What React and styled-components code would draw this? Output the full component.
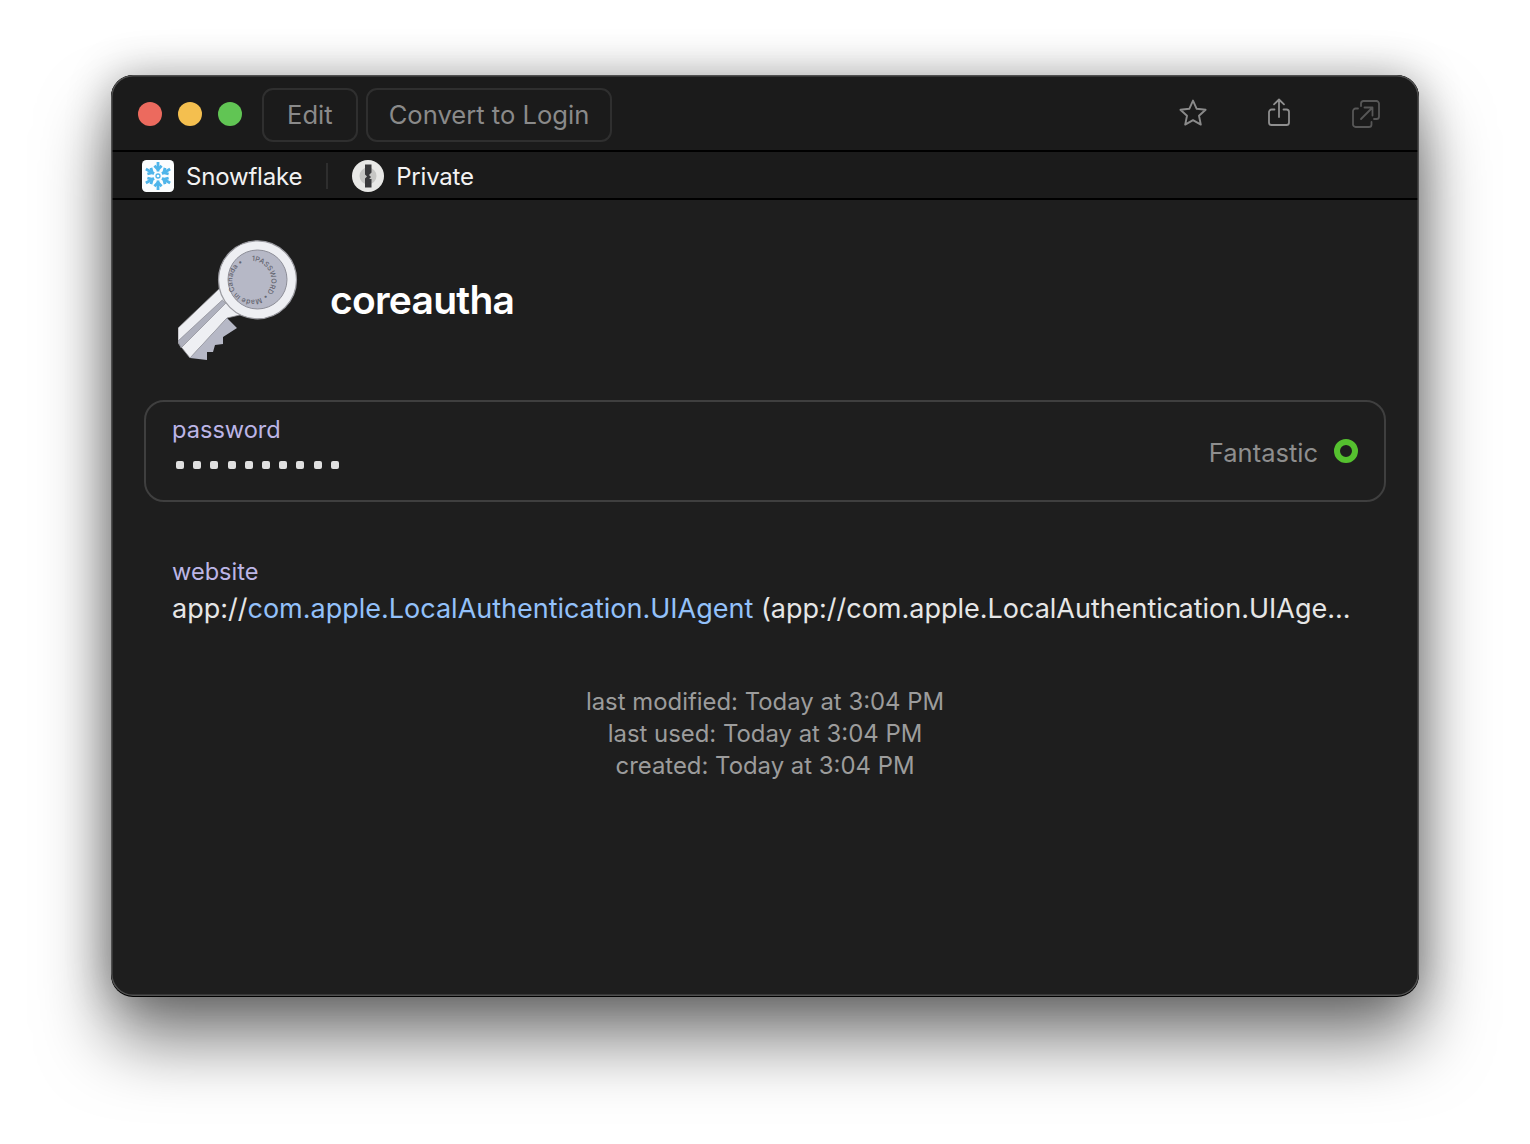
import styled, { createGlobalStyle } from "styled-components";

const GlobalStyle = createGlobalStyle`
  html, body {
    margin: 0;
    padding: 0;
    background: #fff;
  }
  body {
    font-family: Inter, "Noto Sans", "Liberation Sans", sans-serif;
  }
`;

const App = () => {
  return (
    <Page>
      <GlobalStyle />
      <Window>
        <TitleBar>
          <Lights>
            <Light color="#ec6a5e" />
            <Light color="#f4bf4f" />
            <Light color="#61c554" />
          </Lights>
          <ToolButton inset={23}>Edit</ToolButton>
          <ToolButton inset={21}>Convert to Login</ToolButton>
          <ToolIcons>
            <IconSlot>
              <StarIcon />
            </IconSlot>
            <IconSlot>
              <ShareIcon />
            </IconSlot>
            <IconSlot>
              <OpenIcon />
            </IconSlot>
          </ToolIcons>
        </TitleBar>

        <PathBar>
          <PathItem>
            <SnowflakeLogo />
            <span>Snowflake</span>
          </PathItem>
          <PathDivider />
          <PathItem>
            <VaultLogo />
            <span>Private</span>
          </PathItem>
        </PathBar>

        <Content>
          <Header>
            <KeyIcon />
            <Title>coreautha</Title>
          </Header>

          <PasswordBox>
            <PasswordField>
              <FieldLabel>password</FieldLabel>
              <Dots>
                {Array.from({ length: 10 }).map((_, i) => (
                  <Dot key={i} />
                ))}
              </Dots>
            </PasswordField>
            <Strength>
              <span>Fantastic</span>
              <StrengthRing />
            </Strength>
          </PasswordBox>

          <WebsiteField>
            <FieldLabel>website</FieldLabel>
            <WebsiteValue>
              app://<Host>com.apple.LocalAuthentication.UIAgent</Host> (app://com.apple.LocalAuthentication.UIAge...
            </WebsiteValue>
          </WebsiteField>

          <Meta>
            <div>last modified: Today at 3:04 PM</div>
            <div>last used: Today at 3:04 PM</div>
            <div>created: Today at 3:04 PM</div>
          </Meta>
        </Content>
      </Window>
    </Page>
  );
};

const StarIcon = () => (
  <svg width="30" height="30" viewBox="0 0 30 30" fill="none">
    <path
      d="M15 2.600l3.700 8.200 8.900 1-6.600 6 1.800 8.800-7.800-4.500-7.800 4.500 1.800-8.800-6.600-6 8.900-1z"
      stroke="#8a8a8a"
      strokeWidth="1.9"
      strokeLinejoin="round"
    />
  </svg>
);

const ShareIcon = () => (
  <svg width="24" height="30" viewBox="0 0 24 30" fill="none">
    <path
      d="M7.500 11.500H4.600A2.600 2.600 0 0 0 2 14.100v10.300A2.600 2.600 0 0 0 4.600 27h14.800a2.600 2.600 0 0 0 2.600-2.600V14.100a2.600 2.600 0 0 0-2.600-2.600h-2.900"
      stroke="#8f8f8f"
      strokeWidth="1.8"
      strokeLinecap="round"
    />
    <path
      d="M12 19V1.800M7 6.400l5-4.900 5 4.900"
      stroke="#8f8f8f"
      strokeWidth="1.8"
      strokeLinecap="round"
      strokeLinejoin="round"
    />
  </svg>
);

const OpenIcon = () => (
  <svg width="30" height="30" viewBox="-1 -1 30 30" fill="none">
    <path
      d="M10 7V4.600A2.600 2.600 0 0 1 12.600 2h12.800A2.600 2.600 0 0 1 28 4.600v12.800a2.600 2.600 0 0 1-2.600 2.600h-2.400"
      stroke="#575757"
      strokeWidth="1.8"
      strokeLinecap="round"
    />
    <path
      d="M7 9.500H4.600A2.600 2.600 0 0 0 2 12.100v13.300A2.600 2.600 0 0 0 4.600 28h13.300a2.600 2.600 0 0 0 2.600-2.600V23"
      stroke="#575757"
      strokeWidth="1.8"
      strokeLinecap="round"
    />
    <path
      d="M10 20L21 9M13.500 8.500H21.500V16.500"
      stroke="#575757"
      strokeWidth="1.8"
      strokeLinecap="round"
      strokeLinejoin="round"
    />
  </svg>
);

const SnowflakeLogo = () => (
  <LogoBox>
    <svg width="32" height="32" viewBox="0 0 32 32" fill="none">
      <rect width="32" height="32" rx="4.500" fill="#fbfdfe" />
      {[0, 60, 120, 180, 240, 300].map((angle) => (
        <g
          key={angle}
          transform={`rotate(${angle} 16 16)`}
          stroke="#4fb5ea"
          strokeWidth="2.800"
          strokeLinecap="butt"
          strokeLinejoin="miter"
        >
          <path d="M16 11.500V2" />
          <path d="M12.400 5.800L16 9.400L19.600 5.800" />
        </g>
      ))}
      <circle cx="16" cy="16" r="4" fill="#fbfdfe" />
      <circle cx="16" cy="16" r="2" stroke="#4fb5ea" strokeWidth="1.300" />
    </svg>
  </LogoBox>
);

const VaultLogo = () => (
  <LogoBox>
    <svg width="32" height="32" viewBox="0 0 32 32">
      <circle cx="16" cy="16" r="16" fill="#e8e8e6" />
      <circle cx="16" cy="16" r="8.500" fill="#c6c6c4" />
      <path
        d="M13 4.500H19.500V12.500L17 15L19 17L17.200 19L19.500 19V27.500H13V18.500L15 16.500L13 14.500Z"
        fill="#39393b"
      />
    </svg>
  </LogoBox>
);

const KeyIcon = () => (
  <KeyBox>
    <svg width="120" height="120" viewBox="0 0 120 120">
      <defs>
        <path id="sealArc" d="M73.800 20.850A19.500 19.500 0 1 1 73.790 20.850" />
      </defs>
      {/* blade */}
      <path
        d="M0 88L42 48L66 74L49 78L12 118L0 103Z"
        fill="#eeeff3"
        stroke="#8b8b91"
        strokeWidth="0.8"
      />
      {/* cut teeth */}
      <path
        d="M12 118L29 120V112L35 112L37 105L45 104V97L59 88L49 78Z"
        fill="#b6b8c6"
      />
      {/* groove */}
      <path d="M0 101L44.300 60L47.700 63.300L3 108Z" fill="#aeb0bd" stroke="#7f8088" strokeWidth="0.6" />
      {/* bow */}
      <circle cx="79.500" cy="39.800" r="39" fill="#eeeff3" stroke="#9a9aa0" strokeWidth="1.200" />
      <circle cx="79.500" cy="39.500" r="29.500" fill="#b6b8c6" stroke="#8d8e98" strokeWidth="1" />
      <text fontFamily="Inter, sans-serif" fontSize="7" fontWeight="500" fill="#63646f" letterSpacing="0.100">
        <textPath href="#sealArc">1PASSWORD • Made in Canada •</textPath>
      </text>
    </svg>
  </KeyBox>
);

const Page = styled.div`
  box-sizing: border-box;
  width: 1530px;
  height: 1144px;
  padding: 75px 111px 148px;
  background: #fff;
`;

const Window = styled.div`
  position: relative;
  box-sizing: border-box;
  display: flex;
  flex-direction: column;
  height: 921px;
  border-radius: 22px;
  overflow: hidden;
  background: #1e1e1e;
  box-shadow:
    0 1px 0 #000,
    0 44px 70px rgba(0, 0, 0, 0.52),
    0 0 44px rgba(0, 0, 0, 0.3);

  &::after {
    content: "";
    position: absolute;
    inset: 0;
    border-radius: 22px;
    box-shadow: inset 0 0 0 1.500px #505050;
    pointer-events: none;
  }
`;

const TitleBar = styled.div`
  display: flex;
  align-items: center;
  flex-shrink: 0;
  box-sizing: border-box;
  height: 77px;
  padding: 3px 0 0 27px;
  background: #1b1b1b;
  border-bottom: 2px solid #000;
`;

const Lights = styled.div`
  display: flex;
  gap: 16px;
  margin-right: 20px;
`;

const Light = styled.span`
  width: 24px;
  height: 24px;
  border-radius: 50%;
  background: ${(p) => p.color};
`;

const ToolButton = styled.div`
  display: flex;
  align-items: center;
  box-sizing: border-box;
  height: 54px;
  margin: 2px 8px 0 0;
  padding: 0 ${(p) => p.inset}px 2px;
  border: 2px solid #2f2f2f;
  border-radius: 11px;
  color: #8a8a8a;
  font-size: 25.600px;
`;

const ToolIcons = styled.div`
  display: flex;
  align-items: center;
  gap: 56px;
  margin: 0 39px 2px auto;
`;

const IconSlot = styled.div`
  display: flex;
  justify-content: center;
  width: 30px;
`;

const PathBar = styled.div`
  display: flex;
  align-items: center;
  flex-shrink: 0;
  box-sizing: border-box;
  height: 48px;
  padding: 2px 0 0 31px;
  background: #1b1b1b;
  border-bottom: 2px solid #000;
  color: #f2f2f2;
  font-size: 24px;
  letter-spacing: -0.200px;
`;

const PathItem = styled.div`
  display: flex;
  align-items: center;
  gap: 12px;
`;

const PathDivider = styled.div`
  width: 2px;
  height: 26px;
  margin: 0 24px;
  background: #2e2e2e;
`;

const LogoBox = styled.div`
  display: flex;
  width: 32px;
  height: 32px;
`;

const Content = styled.div`
  flex: 1;
  padding: 40px 33px 0;
`;

const Header = styled.div`
  display: flex;
  align-items: center;
  gap: 32px;
  padding-left: 34px;
`;

const KeyBox = styled.div`
  display: flex;
  width: 120px;
  height: 120px;
`;

const Title = styled.h1`
  margin: 0;
  padding-bottom: 2px;
  color: #fff;
  font-size: 39px;
  font-weight: 600;
  letter-spacing: -0.750px;
`;

const PasswordBox = styled.div`
  display: flex;
  align-items: center;
  justify-content: space-between;
  box-sizing: border-box;
  height: 102px;
  margin-top: 40px;
  padding: 0 26px;
  border: 2px solid #3f3f3f;
  border-radius: 20px;
`;

const PasswordField = styled.div`
  padding-bottom: 18px;
`;

const FieldLabel = styled.div`
  color: #bcb5e6;
  font-size: 23.600px;
  line-height: 30px;
`;

const Dots = styled.div`
  display: flex;
  gap: 9.200px;
  margin: 16px 0 0 4px;
`;

const Dot = styled.span`
  width: 8px;
  height: 8px;
  border-radius: 2px;
  background: #e0e0e0;
`;

const Strength = styled.div`
  display: flex;
  align-items: center;
  gap: 16px;
  padding-top: 2px;
  color: #8e8e8e;
  font-size: 25.500px;
`;

const StrengthRing = styled.span`
  box-sizing: border-box;
  width: 24px;
  height: 24px;
  margin-bottom: 2px;
  border: 6px solid #55c12f;
  border-radius: 50%;
`;

const WebsiteField = styled.div`
  margin-top: 55px;
  padding-left: 28px;
`;

const WebsiteValue = styled.div`
  margin-top: 4px;
  color: #e6e6e6;
  font-size: 27px;
  line-height: 36px;
  white-space: nowrap;
`;

const Host = styled.span`
  color: #93c1fa;
`;

const Meta = styled.div`
  margin-top: 59px;
  color: #9c9c9c;
  font-size: 23.900px;
  line-height: 32px;
  text-align: center;
`;

export default App;
